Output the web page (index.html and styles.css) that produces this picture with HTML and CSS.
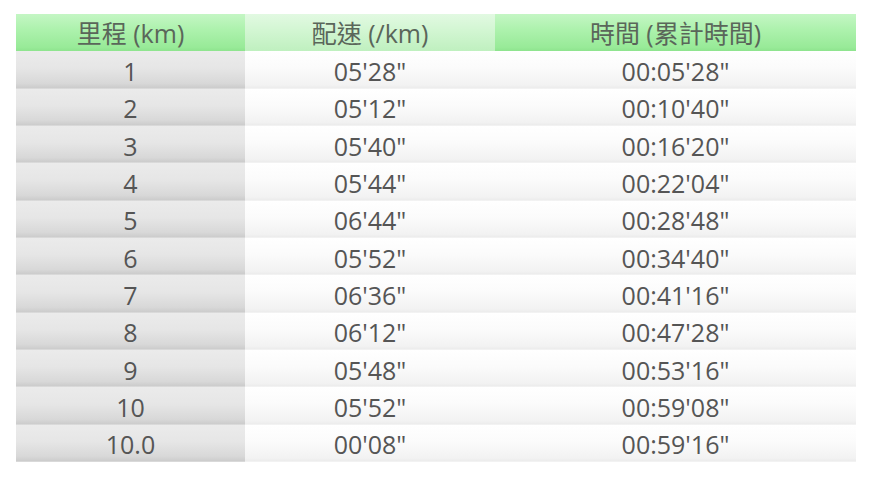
FILE: index.html
```html
<!DOCTYPE html>
<html lang="zh-Hant">
<head>
<meta charset="utf-8">
<link rel="stylesheet" href="styles.css">
</head>
<body>
<div class="splits">
  <div class="cell head c1">里程 (km)</div><div class="cell head c2">配速 (/km)</div><div class="cell head c3">時間 (累計時間)</div>
  <div class="cell c1">1</div><div class="cell c2">05'28"</div><div class="cell c3">00:05'28"</div>
  <div class="cell c1">2</div><div class="cell c2">05'12"</div><div class="cell c3">00:10'40"</div>
  <div class="cell c1">3</div><div class="cell c2">05'40"</div><div class="cell c3">00:16'20"</div>
  <div class="cell c1">4</div><div class="cell c2">05'44"</div><div class="cell c3">00:22'04"</div>
  <div class="cell c1">5</div><div class="cell c2">06'44"</div><div class="cell c3">00:28'48"</div>
  <div class="cell c1">6</div><div class="cell c2">05'52"</div><div class="cell c3">00:34'40"</div>
  <div class="cell c1">7</div><div class="cell c2">06'36"</div><div class="cell c3">00:41'16"</div>
  <div class="cell c1">8</div><div class="cell c2">06'12"</div><div class="cell c3">00:47'28"</div>
  <div class="cell c1">9</div><div class="cell c2">05'48"</div><div class="cell c3">00:53'16"</div>
  <div class="cell c1">10</div><div class="cell c2">05'52"</div><div class="cell c3">00:59'08"</div>
  <div class="cell c1">10.0</div><div class="cell c2">00'08"</div><div class="cell c3">00:59'16"</div>
</div>
</body>
</html>
```
FILE: styles.css
```css
html, body {
  margin: 0;
  padding: 0;
  background: #ffffff;
}
body {
  padding: 14px 16px 0 16px;
  font-family: "Open Sans", "Noto Sans CJK TC", sans-serif;
  color: #555555;
}
.splits {
  width: 840px;
  height: 448px;
  display: grid;
  grid-template-columns: 229px 250px 361px;
  grid-template-rows: repeat(12, 1fr);
}
.cell {
  display: flex;
  align-items: center;
  justify-content: center;
  font-size: 25px;
  line-height: 1;
  padding-top: 3px;
  box-sizing: border-box;
}
.cell.c1 {
  background: linear-gradient(to bottom, #ebebeb 0%, #e6e6e6 45%, #d8d8d8 85%, #cccccc 97%, #e4e4e4 100%);
}
.cell.c2, .cell.c3 {
  background: linear-gradient(to bottom, #ffffff 0%, #fbfbfb 45%, #f2f2f2 90%, #ececec 97%, #f7f7f7 100%);
}
.cell.head {
  color: #5a665a;
  padding-top: 1px;
}
.cell.head.c1, .cell.head.c3 {
  background: linear-gradient(to bottom, #c4f6c4 0%, #aef2ae 40%, #98ea98 90%, #8ee48e 100%);
}
.cell.head.c2 {
  background: linear-gradient(to bottom, #e2f9e2 0%, #d2f6d2 45%, #bff0bf 100%);
}
```
